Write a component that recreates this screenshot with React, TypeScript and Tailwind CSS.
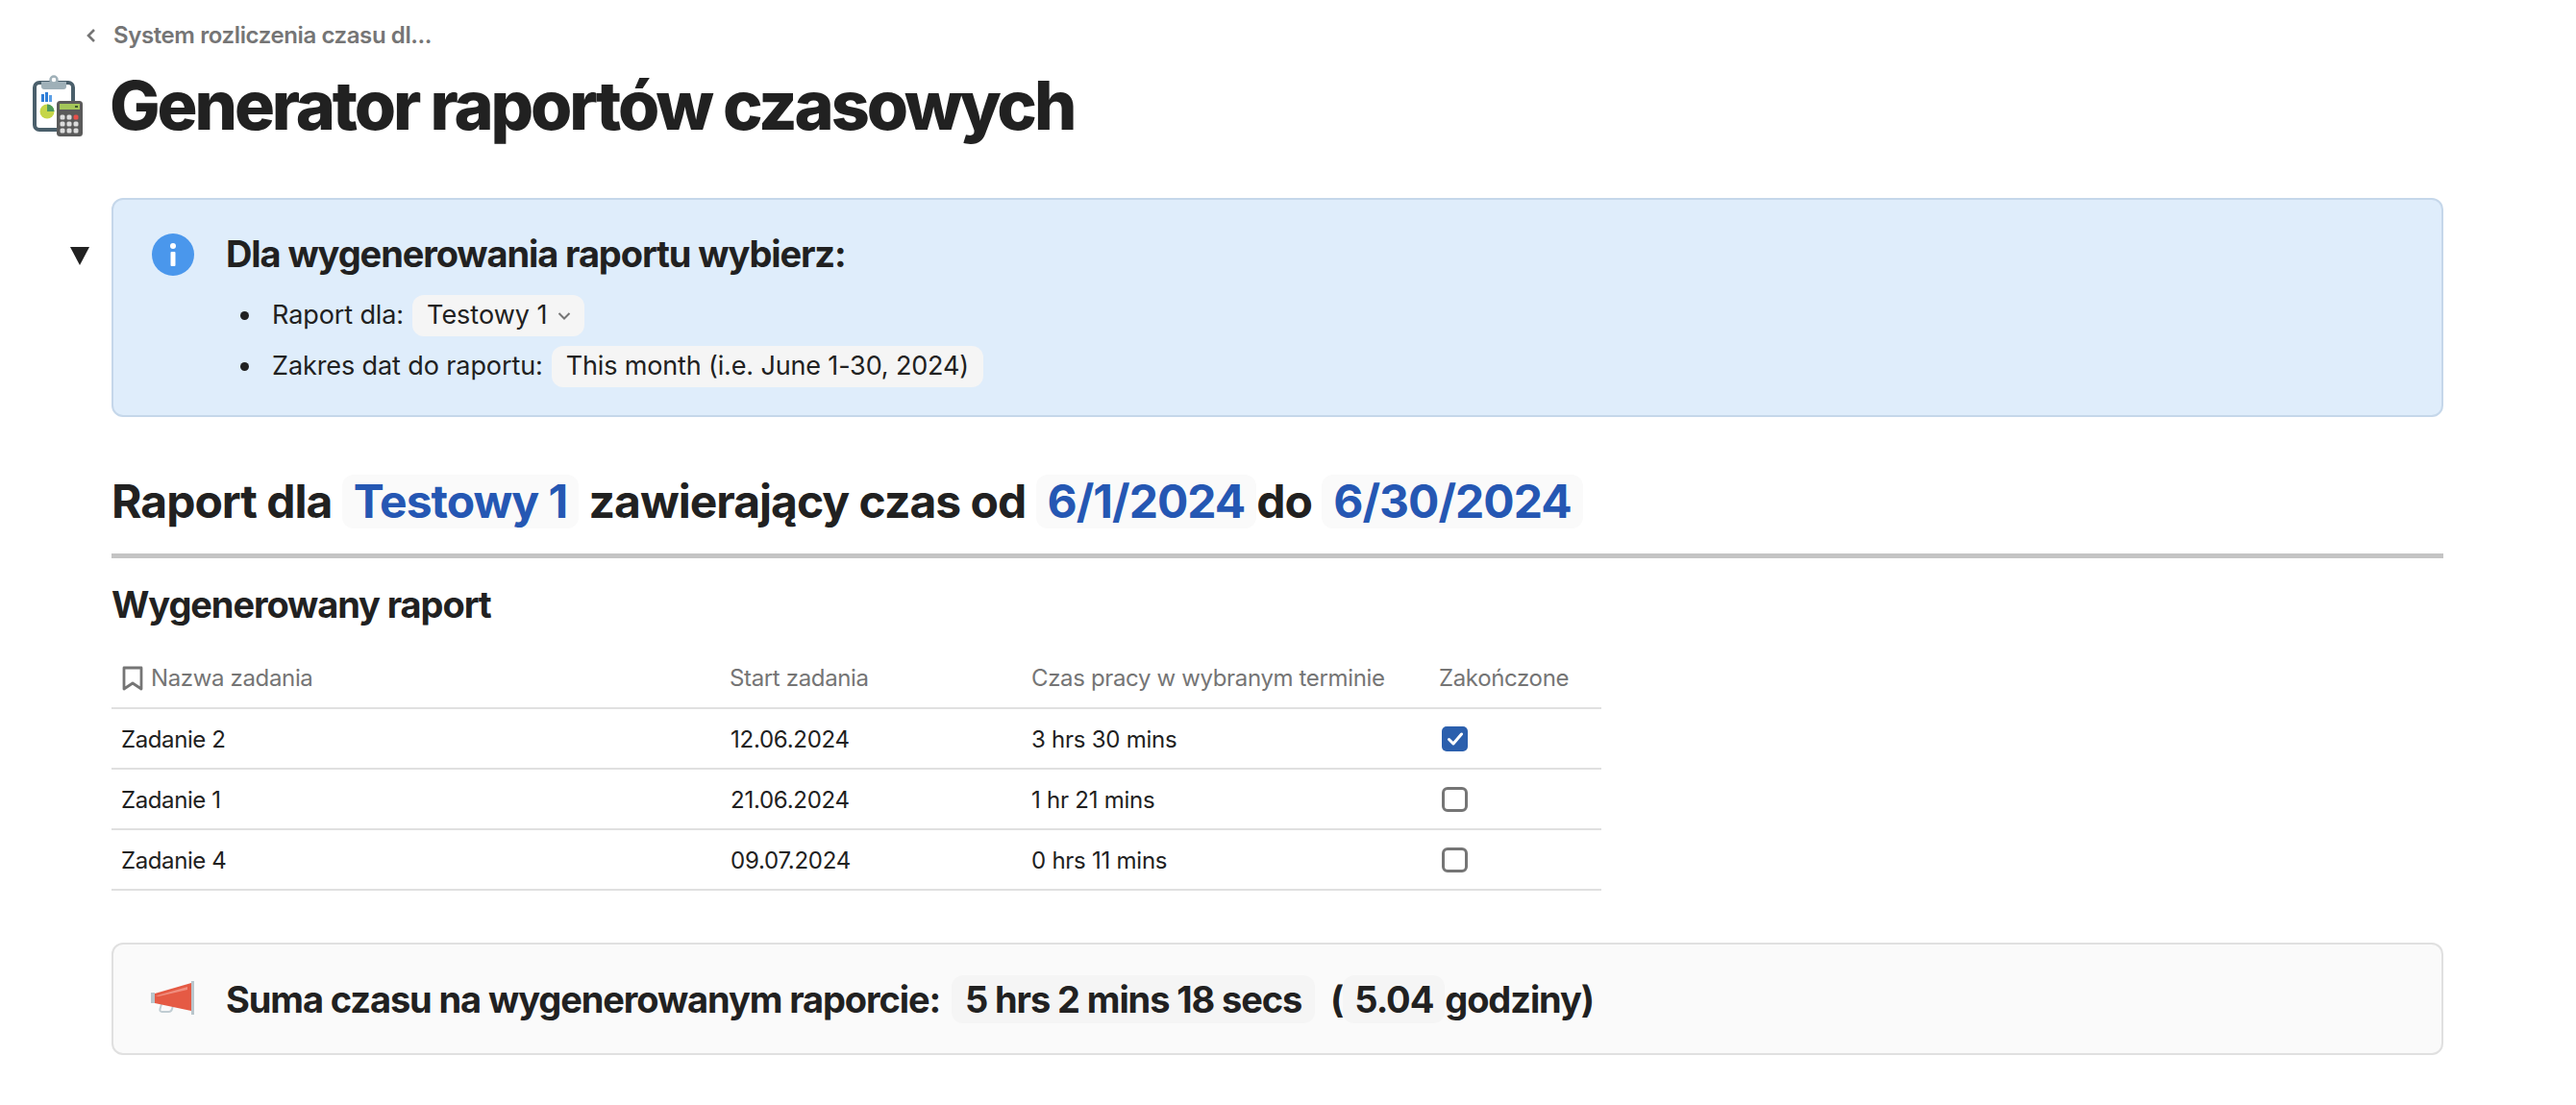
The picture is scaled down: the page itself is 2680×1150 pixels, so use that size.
const rows = [
  { name: 'Zadanie 2', start: '12.06.2024', time: '3 hrs 30 mins', done: true },
  { name: 'Zadanie 1', start: '21.06.2024', time: '1 hr 21 mins', done: false },
  { name: 'Zadanie 4', start: '09.07.2024', time: '0 hrs 11 mins', done: false },
];

function ReportIcon() {
  const cols = [31, 38, 45];
  const rowsY = [44, 51, 58];
  return (
    <svg width="52" height="64" viewBox="0 0 52 64" fill="none">
      <rect x="2" y="8" width="40" height="49" rx="5" fill="#fff" stroke="#4a5f6b" strokeWidth="4" />
      <path d="M9 7h26v5a3 3 0 0 1-3 3H12a3 3 0 0 1-3-3z" fill="#9fb0b8" />
      <circle cx="22" cy="5" r="3.500" fill="#fff" stroke="#9fb0b8" strokeWidth="2.500" />
      <rect x="9" y="20" width="3" height="8" fill="#2f7ed8" />
      <rect x="13" y="18" width="3" height="10" fill="#2f7ed8" />
      <rect x="17" y="21" width="3" height="7" fill="#5b9fe6" />
      <circle cx="15" cy="38" r="7.500" fill="#c5d648" />
      <path d="M15 38v-7.500a7.500 7.500 0 0 1 7.500 7.500z" fill="#4d9a5b" />
      <rect x="25" y="27" width="27" height="37" rx="3.500" fill="#5a5a5a" />
      <rect x="28" y="30" width="21" height="6" fill="#a4c65a" />
      <rect x="44" y="32" width="3" height="2" fill="#3d5a2a" />
      {rowsY.map((y, r) =>
        cols.map((x, c) => (
          <rect key={`${r}-${c}`} x={x - 2.5} y={y - 2.5} width="5" height="5" rx="1.500" fill={r === 0 && c === 2 ? '#e8504a' : '#dcdcdc'} />
        )),
      )}
    </svg>
  );
}

function Megaphone() {
  return (
    <svg width="45" height="35" viewBox="0 0 45 35" fill="none">
      <path d="M11 24l-1.500 5c-.5 2 .5 3 2 3h7c2 0 3-1 3.500-3l1-3" stroke="#c0ccd2" strokeWidth="2" />
      <rect x="0" y="12" width="4" height="11" fill="#b9c6cc" />
      <path d="M4 13 42 2v29L4 23z" fill="#e55a44" />
      <path d="M5 15.500 38 6 38 9 8 16z" fill="#f08f80" />
      <rect x="42" y="0" width="3" height="35" fill="#b9c6cc" />
    </svg>
  );
}

function Check({ done }: { done: boolean }) {
  if (done) {
    return (
      <span className="ml-[3px] flex h-[26px] w-[27px] items-center justify-center rounded-[5px] bg-[#2b5fad]">
        <svg width="20" height="20" viewBox="0 0 20 20" fill="none">
          <path d="M3.500 10.500 8 15 16.500 5" stroke="#fff" strokeWidth="3" strokeLinecap="round" strokeLinejoin="round" />
        </svg>
      </span>
    );
  }
  return <span className="ml-[3px] block h-[26px] w-[27px] rounded-[6px] border-[3px] border-[#757575]" />;
}

export default function App() {
  return (
    <div className="min-h-[1150px] bg-white pr-[138px] font-['Inter','Liberation_Sans',sans-serif] text-[#212121]">
      <div className="flex h-[72px] items-center pl-[88px] pt-[1px] text-[24px] leading-[30px] font-semibold tracking-[-0.4px] text-[#757575]">
        <svg width="14" height="18" viewBox="0 0 14 18" fill="none" className="mr-[16px]">
          <path d="M10 3 4 9l6 6" stroke="#757575" strokeWidth="2.600" />
        </svg>
        <span>System rozliczenia czasu dl...</span>
      </div>

      <div className="flex items-center pl-[34px]">
        <ReportIcon />
        <h1 className="ml-[28px] text-[70px] leading-[76px] font-extrabold tracking-[-3.1px]">Generator raportów czasowych</h1>
      </div>

      <div className="mt-[58px] flex pl-[72px]">
        <div className="w-[44px] pt-[50px]">
          <svg width="22" height="20" viewBox="0 0 22 20">
            <path d="M1 1h20L11 20z" fill="#212121" />
          </svg>
        </div>
        <div className="flex h-[228px] flex-1 rounded-[12px] border-2 border-[#c5d7ea] bg-[#dfedfb] pt-[34px] pl-[40px]">
          <svg width="44" height="44" viewBox="0 0 44 44" className="mt-[1px] shrink-0">
            <circle cx="22" cy="22" r="22" fill="#4a97ec" />
            <circle cx="22" cy="13" r="3" fill="#fff" />
            <rect x="19.500" y="19" width="5" height="15" rx="1" fill="#fff" />
          </svg>
          <div className="ml-[33px]">
            <h3 className="text-[38px] leading-[44px] font-bold tracking-[-1.1px]">Dla wygenerowania raportu wybierz:</h3>
            <ul className="mt-[20px] ml-[15px] list-none text-[27px] tracking-[-0.1px]">
              <li className="flex h-[45px] items-center">
                <span className="mr-[24px] h-[9px] w-[9px] rounded-full bg-[#212121]" />
                <span>Raport dla:</span>
                <span className="ml-[9px] flex h-[43px] items-center rounded-[12px] bg-[#f5f5f5] pl-[15px] pr-[14px] tracking-normal">
                  Testowy 1
                  <svg width="14" height="10" viewBox="0 0 14 10" fill="none" className="ml-[10px]">
                    <path d="M1.500 2 7 7.500 12.500 2" stroke="#757575" strokeWidth="2" />
                  </svg>
                </span>
              </li>
              <li className="mt-[8px] flex h-[45px] items-center">
                <span className="mr-[24px] h-[9px] w-[9px] rounded-full bg-[#212121]" />
                <span>Zakres dat do raportu:</span>
                <span className="ml-[9px] flex h-[43px] items-center rounded-[12px] bg-[#f5f5f5] px-[15px] tracking-[-0.15px]">This month (i.e. June 1-30, 2024)</span>
              </li>
            </ul>
          </div>
        </div>
      </div>

      <div className="pl-[116px]">
        <h2 className="mt-[60px] flex h-[56px] items-center text-[48px] leading-[56px] font-bold tracking-[-1px] whitespace-pre">
          <span>Raport dla </span>
          <span className="rounded-[12px] bg-[#fafafa] px-[12px] text-[#2557b3]">Testowy 1</span>
          <span> zawierający czas od </span>
          <span className="rounded-[12px] bg-[#fafafa] px-[12px] text-[#2557b3]">6/1/2024</span>
          <span>do </span>
          <span className="rounded-[12px] bg-[#fafafa] px-[12px] text-[#2557b3]">6/30/2024</span>
        </h2>
        <div className="mt-[26px] h-[5px] bg-[#c4c4c4]" />

        <h3 className="mt-[26px] text-[38px] leading-[44px] font-bold tracking-[-1.1px]">Wygenerowany raport</h3>

        <div className="mt-[24px] w-[1550px] text-[24px] tracking-[-0.25px]">
          <div className="grid h-[63px] grid-cols-[633px_314px_424px_169px] items-center border-b-2 border-[#e0e0e0] pl-[10px] tracking-[-0.35px] text-[#757575]">
            <span className="flex items-center">
              <svg width="24" height="28" viewBox="0 0 24 28" fill="none" className="mr-[7px]">
                <path d="M3 3h18v22l-9-6-9 6z" stroke="#757575" strokeWidth="2.800" strokeLinejoin="round" />
              </svg>
              Nazwa zadania
            </span>
            <span>Start zadania</span>
            <span>Czas pracy w wybranym terminie</span>
            <span>Zakończone</span>
          </div>
          {rows.map((r) => (
            <div key={r.name} className="grid h-[63px] grid-cols-[633px_314px_424px_169px] items-center border-b-2 border-[#e0e0e0] pl-[10px]">
              <span className="pt-[2px] tracking-[-0.4px]">{r.name}</span>
              <span className="pt-[2px] pl-[1px]">{r.start}</span>
              <span className="pt-[2px]">{r.time}</span>
              <span><Check done={r.done} /></span>
            </div>
          ))}
        </div>

        <div className="mt-[54px] flex h-[117px] items-center rounded-[12px] border-2 border-[#e0e0e0] bg-[#fafafa] pl-[39px] text-[38px] leading-[50px] font-bold tracking-[-1.1px] whitespace-pre">
          <span className="mb-[3px] shrink-0"><Megaphone /></span>
          <span className="ml-[33px]">Suma czasu na wygenerowanym raporcie: </span>
          <span className="ml-[4px] rounded-[12px] bg-[#f5f5f5] px-[14px]">5 hrs 2 mins 18 secs</span>
          <span className="ml-[8px]"> (</span>
          <span className="rounded-[12px] bg-[#f5f5f5] px-[12px]">5.04</span>
          <span>godziny)</span>
        </div>
      </div>
    </div>
  );
}
